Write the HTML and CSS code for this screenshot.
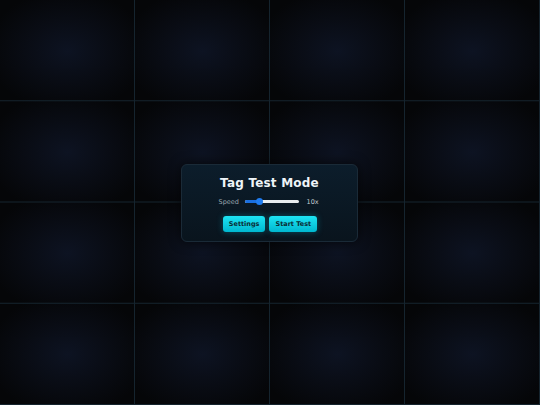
FILE: index.html
```html
<!DOCTYPE html>
<html>
<head>
<meta charset="utf-8">
<link rel="stylesheet" href="styles.css">
</head>
<body>
<main class="stage">
  <section class="panel">
    <h1 class="title">Tag Test Mode</h1>
    <div class="speed-row">
      <span class="label">Speed</span>
      <div class="slider"><div class="fill" style="width:28%"></div><div class="thumb" style="left:28%"></div></div>
      <span class="value">10x</span>
    </div>
    <div class="actions">
      <button class="btn">Settings</button>
      <button class="btn">Start Test</button>
    </div>
  </section>
</main>
</body>
</html>
```
FILE: styles.css
```css
html, body { margin: 0; padding: 0; }
body {
  width: 540px;
  height: 405px;
  overflow: hidden;
  background-color: #050608;
  background-image:
    linear-gradient(to right, transparent 134px, #15242e 134px, #15242e 135px, transparent 135px),
    linear-gradient(to bottom, transparent calc(100% - 1px), #15242e calc(100% - 1px)),
    radial-gradient(ellipse at center, #0d1322 0%, #090c14 45%, #050608 85%);
  background-size: 135px 101.25px;
  font-family: "DejaVu Sans", "Liberation Sans", sans-serif;
}
.stage {
  width: 540px;
  height: 405px;
  display: flex;
  align-items: center;
  justify-content: center;
}
.panel {
  width: 177px;
  height: 78px;
  box-sizing: border-box;
  margin-left: -1px;
  border: 1px solid #1a2a37;
  border-radius: 6px;
  background: linear-gradient(180deg, #0c1d2b 0%, #09141d 100%);
  box-shadow: 0 0 12px rgba(0,0,0,0.6);
  display: flex;
  flex-direction: column;
  align-items: center;
  padding-top: 11px;
}
.title {
  margin: 0;
  color: #eef4f8;
  font-size: 12px;
  font-weight: bold;
  letter-spacing: 0.2px;
  line-height: 15px;
}
.speed-row {
  display: flex;
  align-items: center;
  margin-top: 6px;
  height: 10px;
}
.label, .value {
  font-size: 6.5px;
  color: #9aa6b0;
}
.label { width: 26px; }
.value { width: 14px; margin-left: 8px; color: #c6ced4; }
.slider {
  position: relative;
  width: 54px;
  height: 3px;
  background: #e8ecef;
  border-radius: 2px;
}
.fill {
  height: 3px;
  background: #1a6fe0;
  border-radius: 2px;
}
.thumb {
  position: absolute;
  top: -2px;
  width: 7px;
  height: 7px;
  margin-left: -3.5px;
  border-radius: 50%;
  background: #1f7cf0;
}
.actions {
  display: flex;
  gap: 4px;
  margin-top: 9px;
  margin-left: 1px;
}
.btn {
  height: 16px;
  padding: 0 6px;
  border: none;
  border-radius: 3px;
  background: linear-gradient(180deg, #1de4f4 0%, #00b7cf 100%);
  box-shadow: 0 0 6px rgba(0, 200, 230, 0.35);
  color: #0b2b33;
  font-family: "DejaVu Sans", "Liberation Sans", sans-serif;
  font-size: 6.5px;
  font-weight: 600;
}
```
